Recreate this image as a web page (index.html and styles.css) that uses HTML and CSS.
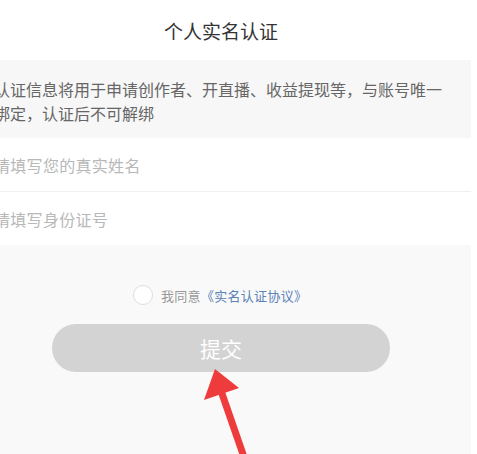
FILE: index.html
```html
<html>
<head>
<meta charset="utf-8">
<link rel="stylesheet" href="styles.css">
<title>个人实名认证</title>
</head>
<body>
    <div class="screen">
        <div class="header">个人实名认证</div>
        <div class="notice">认证信息将用于申请创作者、开直播、收益提现等，与账号唯一绑定，认证后不可解绑</div>
        <div class="field divided">请填写您的真实姓名</div>
        <div class="field">请填写身份证号</div>
        <div class="bottom">
            <div class="agree">
                <span class="radio"></span>
                <span class="agreeText">我同意</span>
                <span class="link">《实名认证协议》</span>
            </div>
            <div class="submit">提交</div>
        </div>
    </div>
    <svg class="arrow" width="477" height="454" viewBox="0 0 477 454">
        <line x1="219" y1="385" x2="245" y2="460" stroke="#ee3b3b" stroke-width="7" />
        <polygon points="215,369 204,400 239,388" fill="#ee3b3b" />
    </svg>
</body>
</html>
```

FILE: styles.css
```css
body {margin: 0;
      background-color: white;
      overflow: hidden;
      font-family: "Noto Sans CJK SC", "Noto Sans", sans-serif}
.screen {width: 477px;
         margin-left: -6px}
.header {height: 60px;
         display: flex;
         align-items: center;
         justify-content: center;
         padding-right: 23px;
         font-size: 19px;
         color: #333333}
.notice {height: 78px;
         box-sizing: border-box;
         background-color: #f7f7f7;
         padding: 17px 29px 0 0;
         font-size: 16px;
         line-height: 24px;
         color: #666666}
.field {height: 53px;
        display: flex;
        align-items: center;
        font-size: 16px;
        letter-spacing: 0.3px;
        color: #b8b8b8}
.divided {height: 54px;
          border-bottom: 1px solid #efefef;
          box-sizing: border-box}
.bottom {height: 220px;
         background-color: #f9f9f9;
         padding-top: 39px;
         box-sizing: border-box}
.agree {display: flex;
        align-items: center;
        height: 22px;
        padding-left: 139px;
        font-size: 13px;
        letter-spacing: 0.3px}
.radio {width: 18px;
        height: 18px;
        border: 1px solid #dddddd;
        border-radius: 50%;
        background-color: white;
        margin-right: 8px}
.agreeText {color: #999999}
.link {color: #5b82b8}
.submit {margin: 18px 0 0 58px;
         width: 338px;
         height: 48px;
         border-radius: 24px;
         background-color: #d3d3d3;
         color: white;
         font-size: 21px;
         display: flex;
         align-items: center;
         justify-content: center}
.arrow {position: absolute;
        left: 0;
        top: 0}
```
